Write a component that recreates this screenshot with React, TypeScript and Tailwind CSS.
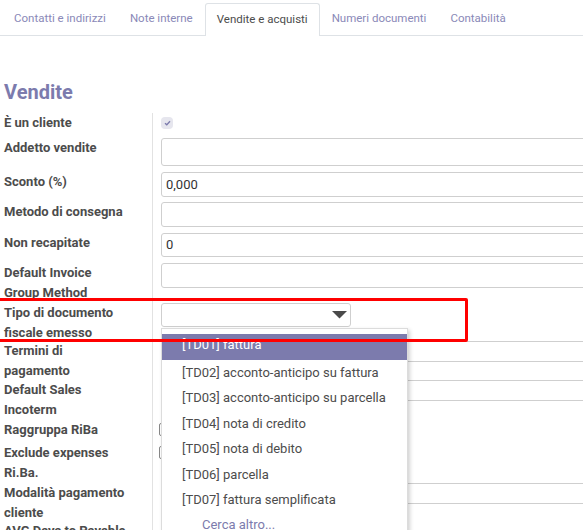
import React from 'react';

const tabs = ['Contatti e indirizzi', 'Note interne', 'Vendite e acquisti', 'Numeri documenti', 'Contabilità'];

const options = [
  '[TD02] acconto-anticipo su fattura',
  '[TD03] acconto-anticipo su parcella',
  '[TD04] nota di credito',
  '[TD05] nota di debito',
  '[TD06] parcella',
  '[TD07] fattura semplificata',
];

// Form row: label on the left, field on the right of the divider
const Row: React.FC<{ label: React.ReactNode; h: string; children?: React.ReactNode }> = ({ label, h, children }) => (
  <div className={`flex ${h}`}>
    <div className="w-[152px] shrink-0 pl-[4px] pr-2 text-[13px] font-bold leading-[19.5px] text-[#4c4c4c]">{label}</div>
    <div className="flex-1 border-l border-[#e2e2e2] pl-[8px]">{children}</div>
  </div>
);

const Input: React.FC<{ value?: string; h: string }> = ({ value, h }) => (
  <div className={`flex w-[470px] items-center rounded-[3px] border border-[#cfcfcf] pl-[4px] text-[13px] text-[#333] ${h}`}>
    {value}
  </div>
);

const Check: React.FC = () => (
  <div className="mt-[4px] flex h-[12px] w-[12px] items-center justify-center rounded-[4px] bg-[#e6e6ee]">
    <svg width="7" height="6" viewBox="0 0 7 6">
      <path d="M1 3.2 L2.8 4.8 L6 1.2" fill="none" stroke="#7c7bad" strokeWidth="1.3" />
    </svg>
  </div>
);

const App: React.FC = () => {
  return (
    <div className="relative h-[530px] w-[583px] overflow-hidden bg-white font-['Roboto',sans-serif]">
      {/* Tabs */}
      <div className="flex border-b border-[#dee2e6] pl-[2px] pt-[3px]">
        {tabs.map((t) => (
          <div
            key={t}
            className={
              t === 'Vendite e acquisti'
                ? '-mb-px flex h-[33px] items-center rounded-t-[3px] border border-b-0 border-[#dee2e6] bg-white px-[11px] text-[11.5px] text-[#4c4c4c]'
                : 'flex h-[32px] items-center border border-transparent px-[11px] text-[11.5px] text-[#8a89b8]'
            }
          >
            {t}
          </div>
        ))}
      </div>

      <h2 className="ml-[4px] mt-[44px] text-[20px] font-bold leading-[24px] text-[#7c7bad]">Vendite</h2>

      <div className="mt-[9px]">
        <Row label="È un cliente" h="h-[25px]">
          <Check />
        </Row>
        <Row label="Addetto vendite" h="h-[34px]">
          <Input h="h-[28px]" />
        </Row>
        <Row label="Sconto (%)" h="h-[30px]">
          <Input h="h-[25px]" value="0,000" />
        </Row>
        <Row label="Metodo di consegna" h="h-[31px]">
          <Input h="h-[25px]" />
        </Row>
        <Row label="Non recapitate" h="h-[30px]">
          <Input h="h-[24px]" value="0" />
        </Row>
        <Row label={<>Default Invoice<br />Group Method</>} h="h-[40px]">
          <Input h="h-[25px]" />
        </Row>
        <Row label={<>Tipo di documento<br />fiscale emesso</>} h="h-[38px]">
          <div className="flex h-[24px] w-[190px] items-center justify-end rounded-[3px] border border-[#cfcfcf] pr-[3px]">
            <svg width="15" height="8" viewBox="0 0 15 8">
              <path d="M0 0 L15 0 L7.5 7.5 Z" fill="#4a4a4a" />
            </svg>
          </div>
        </Row>
        <Row label={<>Termini di<br />pagamento</>} h="h-[39px]">
          <Input h="h-[21px]" />
        </Row>
        <Row label={<>Default Sales<br />Incoterm</>} h="h-[40px]">
          <Input h="h-[21px]" />
        </Row>
        <Row label="Raggruppa RiBa" h="h-[23px]">
          <div className="-ml-[2px] mt-[3px] h-[13px] w-[13px] rounded-[2px] border border-[#888]" />
        </Row>
        <Row label={<>Exclude expenses<br />Ri.Ba.</>} h="h-[40px]">
          <div className="-ml-[2px] mt-[3px] h-[13px] w-[13px] rounded-[2px] border border-[#888]" />
        </Row>
        <Row label={<>Modalità pagamento<br />cliente</>} h="h-[38px]">
          <Input h="h-[21px]" />
        </Row>
        <Row label="AVG Days to Payable" h="h-[30px]" />
      </div>

      {/* Autocomplete dropdown */}
      <div className="absolute left-[161px] top-[328px] h-[220px] w-[247px] border border-[#dcdcdc] bg-white pt-[5px] shadow-[2px_2px_4px_rgba(0,0,0,0.18)]">
        <div className="h-[26px] bg-[#7c7bad] pl-[20px] text-[13px] leading-[22px] text-white">[TD01] fattura</div>
        {options.map((o) => (
          <div key={o} className="h-[25.4px] pl-[20px] text-[13px] leading-[25.4px] text-[#4c4c4c]">
            {o}
          </div>
        ))}
        <div className="h-[25.4px] pl-[40px] text-[13px] leading-[25.4px] text-[#7c7bad]">Cerca altro...</div>
      </div>

      {/* Red annotation box */}
      <div className="absolute left-[-6px] top-[298px] h-[44px] w-[474px] rounded-[2px] border-[3px] border-[#ff0000]" />
    </div>
  );
};

export default App;
